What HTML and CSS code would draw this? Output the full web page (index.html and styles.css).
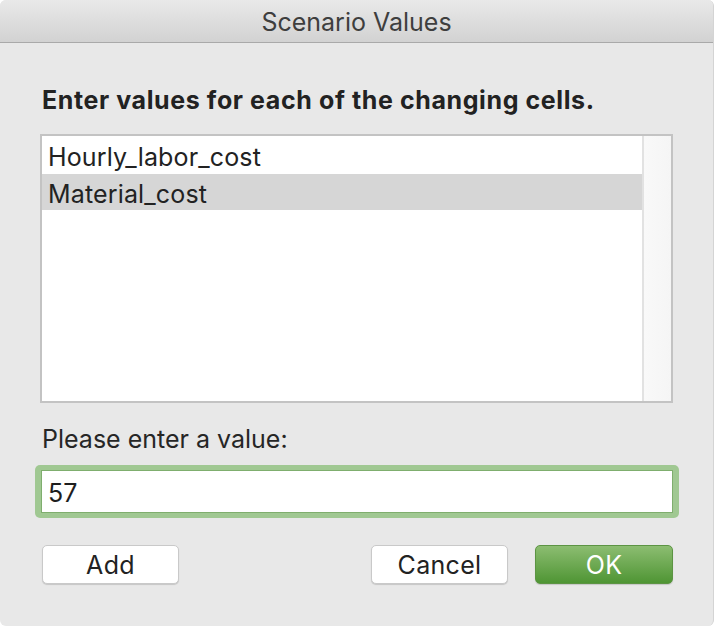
FILE: index.html
```html
<!DOCTYPE html>
<html>
<head>
<meta charset="utf-8">
<link rel="stylesheet" href="styles.css">
</head>
<body>
<div class="window">
  <div class="titlebar">Scenario Values</div>
  <div class="content">
    <div class="heading">Enter values for each of the changing cells.</div>
    <div class="listbox">
      <div class="list">
        <div class="row first">Hourly_labor_cost</div>
        <div class="row selected">Material_cost</div>
      </div>
      <div class="scrollbar"></div>
    </div>
    <div class="label">Please enter a value:</div>
    <div class="ring">
      <div class="field">57</div>
    </div>
    <div class="buttons">
      <div class="btn">Add</div>
      <div class="spacer"></div>
      <div class="btn">Cancel</div>
      <div class="btn ok">OK</div>
    </div>
  </div>
</div>
</body>
</html>
```
FILE: styles.css
```css
html, body {
  margin: 0;
  padding: 0;
  background: #ffffff;
}
body {
  font-family: Inter, "Liberation Sans", sans-serif;
  color: #262626;
}
.window {
  width: 714px;
  height: 626px;
  background: #e8e8e8;
  border-radius: 6px;
  overflow: hidden;
  box-sizing: border-box;
  border-right: 1px solid #d4d4d4;
}
.titlebar {
  height: 43px;
  box-sizing: border-box;
  background: linear-gradient(#e9e9e9, #d2d2d2);
  border-bottom: 1px solid #a9a9a9;
  text-align: center;
  font-size: 25px;
  line-height: 45px;
  color: #3e3e3e;
}
.content {
  padding: 0 40px 0 40px;
}
.heading {
  margin-top: 42px;
  font-weight: 700;
  font-size: 25px;
  letter-spacing: 0.6px;
  line-height: 30px;
  padding-left: 2px;
  color: #222;
}
.listbox {
  margin-top: 19px;
  height: 269px;
  border: 2px solid #c3c3c3;
  box-sizing: border-box;
  background: #fff;
  display: flex;
}
.list {
  flex: 1;
  display: flex;
  flex-direction: column;
}
.row {
  height: 36px;
  box-sizing: border-box;
  line-height: 26px;
  padding-left: 6px;
  padding-top: 7px;
  font-size: 25px;
  letter-spacing: 0.15px;
  color: #222;
}
.row.first {
  height: 38px;
  padding-top: 8px;
}
.row.selected {
  background: #d6d6d6;
}
.scrollbar {
  width: 27px;
  border-left: 2px solid #e2e2e2;
  background: linear-gradient(90deg, #f9f9f9, #f5f5f5);
}
.label {
  margin-top: 21px;
  padding-left: 2px;
  font-size: 25px;
  line-height: 30px;
  color: #262626;
}
.ring {
  margin: 11px -6px 0 -5px;
  height: 53px;
  box-sizing: border-box;
  border-radius: 5px;
  background: #a0c892;
  padding: 5px 6px 5px 6px;
}
.field {
  height: 43px;
  box-sizing: border-box;
  border: 1px solid #7fae6e;
  background: #fff;
  padding-left: 6px;
  padding-top: 4px;
  font-size: 25px;
  line-height: 37px;
  color: #1e1e1e;
}
.buttons {
  margin-top: 27px;
  display: flex;
  gap: 27px;
  padding-left: 2px;
}
.spacer {
  flex: 1;
}
.btn {
  width: 137px;
  height: 39px;
  box-sizing: border-box;
  border-radius: 5px;
  background: #ffffff;
  border: 1px solid #c9c9c9;
  box-shadow: 0 1px 1px rgba(0,0,0,0.15);
  text-align: center;
  font-size: 25px;
  letter-spacing: 0.3px;
  padding-top: 2px;
  line-height: 35px;
  color: #222;
}
.btn.ok {
  width: 138px;
  background: linear-gradient(#8cbd71, #4f9534);
  border: 1px solid #5c9443;
  color: #ffffff;
}
```
